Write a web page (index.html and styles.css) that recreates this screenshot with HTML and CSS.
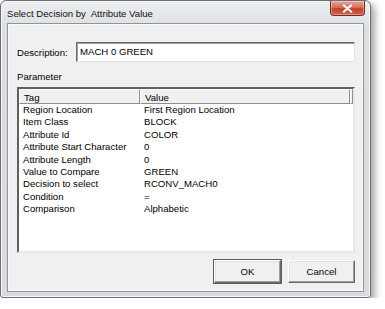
FILE: index.html
```html
<!DOCTYPE html>
<html lang="en">
<head>
    <meta charset="UTF-8">
    <meta name="viewport" content="width=device-width, initial-scale=1.0">
    <title>Select Decision by Attribute Value</title>
    <link rel="stylesheet" href="styles.css">
</head>
<body>
    <div class="window">
        <div class="titlebar">
            <span class="title">Select Decision by&nbsp; Attribute Value</span>
            <div class="close-btn">
                <svg width="11" height="9" viewBox="0 0 11 9">
                    <path d="M2 1.5 L9 7.5 M9 1.5 L2 7.5" stroke="#f4f4f4" stroke-width="2.2" stroke-linecap="square"/>
                </svg>
            </div>
        </div>

        <div class="client">
            <div class="desc-row">
                <label for="description">Description:</label>
                <div class="textbox" id="description">MACH 0 GREEN</div>
            </div>

            <div class="group-label">Parameter</div>

            <div class="listview">
                <div class="lv-header">
                    <div class="hcell col-tag">Tag</div>
                    <div class="hcell col-value">Value</div>
                    <div class="hcell col-fill"></div>
                </div>
                <div class="lv-body">
                    <div class="row"><span class="col-tag">Region Location</span><span>First Region Location</span></div>
                    <div class="row"><span class="col-tag">Item Class</span><span>BLOCK</span></div>
                    <div class="row"><span class="col-tag">Attribute Id</span><span>COLOR</span></div>
                    <div class="row"><span class="col-tag">Attribute Start Character</span><span>0</span></div>
                    <div class="row"><span class="col-tag">Attribute Length</span><span>0</span></div>
                    <div class="row"><span class="col-tag">Value to Compare</span><span>GREEN</span></div>
                    <div class="row"><span class="col-tag">Decision to select</span><span>RCONV_MACH0</span></div>
                    <div class="row"><span class="col-tag">Condition</span><span>=</span></div>
                    <div class="row"><span class="col-tag">Comparison</span><span>Alphabetic</span></div>
                </div>
            </div>

            <div class="buttons">
                <button class="btn btn-default">OK</button>
                <button class="btn">Cancel</button>
            </div>
        </div>
    </div>
</body>
</html>
```

FILE: styles.css
```css
body {
    margin: 0;
    background: #fff;
    font-family: "Liberation Sans", Arial, sans-serif;
    font-size: 9.6px;
    color: #000;
}
.window {
    width: 369px;
    height: 296px;
    border: 1px solid #6b6f75;
    border-radius: 6px 6px 3px 3px;
    background: linear-gradient(to bottom, #eceef0, #dcdfe2 30px, #d8dadd);
    box-shadow: 4px 4px 7px rgba(0, 0, 0, 0.35), inset 0 0 0 1px #f7f8f9;
    display: flex;
    flex-direction: column;
}
.titlebar {
    height: 22px;
    display: flex;
    align-items: flex-start;
    padding-left: 6px;
}
.title {
    margin-top: 7px;
    line-height: 12px;
    color: #111;
}
.close-btn {
    margin-left: auto;
    margin-right: 5px;
    width: 33px;
    height: 14px;
    border: 1px solid #6e2b22;
    border-top: none;
    border-radius: 0 0 4px 4px;
    background: linear-gradient(to bottom, #e8a896, #d3705c 45%, #c2412b 55%, #d2614c);
    box-shadow: inset 0 0 0 1px rgba(255, 255, 255, 0.35);
    display: flex;
    align-items: center;
    justify-content: center;
}
.client {
    flex: 1;
    margin: 0 6px 5px 6px;
    border: 1px solid #8d949c;
    box-shadow: inset 0 0 0 1px #fafafa;
    background: #f0f0f0;
    padding: 18px 8px 0 9px;
    display: flex;
    flex-direction: column;
}
.desc-row {
    display: flex;
    align-items: center;
}
.desc-row label {
    width: 59px;
}
.textbox {
    flex: 1;
    height: 18px;
    line-height: 18px;
    padding-left: 3px;
    background: #fff;
    border-top: 1px solid #696969;
    border-left: 1px solid #696969;
    border-right: 1px solid #e3e3e3;
    border-bottom: 1px solid #e3e3e3;
    box-shadow: inset 1px 1px 0 #a0a0a0;
}
.group-label {
    margin-top: 9px;
    line-height: 12px;
}
.listview {
    margin-top: 4px;
    height: 162px;
    background: #fff;
    border-top: 2px solid #5f5f5f;
    border-left: 2px solid #5f5f5f;
    border-right: 2px solid #e8e8e8;
    border-bottom: 2px solid #e8e8e8;
}
.lv-header {
    display: flex;
    height: 15px;
}
.hcell {
    height: 15px;
    line-height: 15px;
    padding-left: 4px;
    background: #f0f0f0;
    border-top: 1px solid #fff;
    border-left: 1px solid #fff;
    border-right: 1px solid #8f8f8f;
    border-bottom: 1px solid #8f8f8f;
    box-sizing: border-box;
}
.hcell.col-tag {
    width: 121px;
    flex: none;
}
.hcell.col-value {
    flex: 1;
}
.hcell.col-fill {
    width: 3px;
    flex: none;
    padding: 0;
}
.row {
    display: flex;
    height: 12.4px;
    line-height: 12.4px;
    padding-left: 4px;
    white-space: nowrap;
}
.row .col-tag {
    width: 121px;
    flex: none;
}
.buttons {
    display: flex;
    justify-content: flex-end;
    gap: 7px;
    margin-top: 7px;
}
.btn {
    width: 67px;
    height: 23px;
    font-family: inherit;
    font-size: 9.6px;
    color: #000;
    background: #f0f0f0;
    border-top: 1px solid #fff;
    border-left: 1px solid #fff;
    border-right: 1px solid #696969;
    border-bottom: 1px solid #696969;
    box-shadow: inset -1px -1px 0 #a0a0a0, inset 1px 1px 0 #e3e3e3;
    padding: 0;
}
.btn-default {
    outline: 1px solid #5a5a5a;
}
```
